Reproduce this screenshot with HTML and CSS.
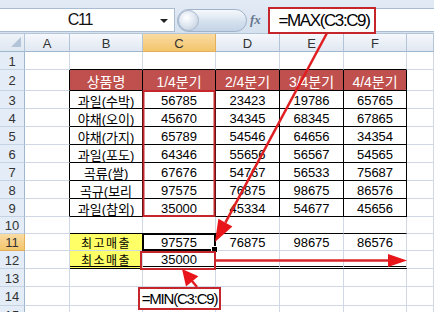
FILE: index.html
```html
<!DOCTYPE html>
<html lang="ko">
<head>
  <meta charset="UTF-8">
  <title>MAX / MIN 함수</title>
  <link rel="stylesheet" href="styles.css">
</head>
<body>
  <div class="window">
    <!-- 수식 입력줄 -->
    <div class="formula-bar">
      <div class="name-box">
        <span class="name">C11</span>
        <span class="drop"></span>
      </div>
      <div class="splitter"><span class="pill"><span class="knob"></span></span></div>
      <div class="fx">fx</div>
      <div class="formula-input"></div>
    </div>

    <!-- 시트 -->
    <div class="sheet">
      <div class="c corner"><span class="tri"></span></div>
      <div class="c ch">A</div><div class="c ch">B</div><div class="c ch sel">C</div>
      <div class="c ch">D</div><div class="c ch">E</div><div class="c ch">F</div><div class="c ch"></div>

      <div class="c rh">1</div><div class="c"></div>
      <div class="c tl"></div><div class="c tl"></div><div class="c tl"></div><div class="c tl"></div><div class="c tl"></div>
      <div class="c"></div>

      <div class="c rh">2</div><div class="c lb"></div>
      <div class="c tb th">상품명</div><div class="c tb th">1/4분기</div><div class="c tb th">2/4분기</div>
      <div class="c tb th">3/4분기</div><div class="c tb th">4/4분기</div>
      <div class="c"></div>

      <div class="c rh">3</div><div class="c lb"></div>
      <div class="c tb">과일(수박)</div><div class="c tb">56785</div><div class="c tb">23423</div>
      <div class="c tb">19786</div><div class="c tb">65765</div>
      <div class="c"></div>

      <div class="c rh">4</div><div class="c lb"></div>
      <div class="c tb">야채(오이)</div><div class="c tb">45670</div><div class="c tb">34345</div>
      <div class="c tb">68345</div><div class="c tb">67865</div>
      <div class="c"></div>

      <div class="c rh">5</div><div class="c lb"></div>
      <div class="c tb">야채(가지)</div><div class="c tb">65789</div><div class="c tb">54546</div>
      <div class="c tb">64656</div><div class="c tb">34354</div>
      <div class="c"></div>

      <div class="c rh">6</div><div class="c lb"></div>
      <div class="c tb">과일(포도)</div><div class="c tb">64346</div><div class="c tb">55656</div>
      <div class="c tb">56567</div><div class="c tb">54565</div>
      <div class="c"></div>

      <div class="c rh">7</div><div class="c lb"></div>
      <div class="c tb">곡류(쌀)</div><div class="c tb">67676</div><div class="c tb">54767</div>
      <div class="c tb">56533</div><div class="c tb">75687</div>
      <div class="c"></div>

      <div class="c rh">8</div><div class="c lb"></div>
      <div class="c tb">곡규(보리</div><div class="c tb">97575</div><div class="c tb">76875</div>
      <div class="c tb">98675</div><div class="c tb">86576</div>
      <div class="c"></div>

      <div class="c rh">9</div><div class="c lb"></div>
      <div class="c tb">과일(참외)</div><div class="c tb">35000</div><div class="c tb">45334</div>
      <div class="c tb">54677</div><div class="c tb">45656</div>
      <div class="c"></div>

      <div class="c rh">10</div><div class="c"></div>
      <div class="c tl"></div><div class="c tl"></div><div class="c tl"></div><div class="c tl"></div><div class="c tl"></div>
      <div class="c"></div>

      <div class="c rh sel">11</div><div class="c"></div>
      <div class="c label">최고매출</div><div class="c active">97575</div><div class="c">76875</div>
      <div class="c">98675</div><div class="c">86576</div>
      <div class="c"></div>

      <div class="c rh">12</div><div class="c"></div>
      <div class="c label dbl">최소매출</div><div class="c dbl">35000</div><div class="c dbl"></div>
      <div class="c dbl"></div><div class="c dbl"></div>
      <div class="c"></div>

      <div class="c rh">13</div><div class="c"></div><div class="c"></div><div class="c"></div>
      <div class="c"></div><div class="c"></div><div class="c"></div><div class="c"></div>

      <div class="c rh">14</div><div class="c"></div><div class="c"></div><div class="c"></div>
      <div class="c"></div><div class="c"></div><div class="c"></div><div class="c"></div>

      <div class="c rh">15</div><div class="c"></div><div class="c"></div><div class="c"></div>
      <div class="c"></div><div class="c"></div><div class="c"></div><div class="c"></div>
    </div>

    <!-- 빨간 표시와 화살표 -->
    <svg class="marks" width="434" height="312" viewBox="0 0 434 312">
      <rect x="143.5" y="91" width="71" height="125" fill="none" stroke="#c4262c" stroke-width="2"/>
      <rect x="141" y="252" width="74" height="17" fill="none" stroke="#c4262c" stroke-width="2"/>
      <line x1="327" y1="33" x2="225.4" y2="222.6" stroke="#e01f22" stroke-width="2.5"/>
      <polygon points="215,242 232.4,226.4 218.4,218.8" fill="#e8161b"/>
      <line x1="216" y1="260.5" x2="390" y2="260.5" stroke="#d8262a" stroke-width="2.5"/>
      <polygon points="407,260.5 388,254 388,267" fill="#e8161b"/>
      <line x1="197" y1="287" x2="192" y2="281" stroke="#e01f22" stroke-width="2.5"/>
      <polygon points="182,269 198.4,276.2 186,286.4" fill="#e8161b"/>
    </svg>

    <div class="callout callout-max">=MAX(C3:C9)</div>
    <div class="callout callout-min">=MIN(C3:C9)</div>
  </div>
</body>
</html>
```

FILE: styles.css
```css
* {
  box-sizing: border-box;
}
body {
  margin: 0;
  font-family: "Liberation Sans", "Noto Sans CJK KR", sans-serif;
  background: #fff;
}
.window {
  position: relative;
  width: 434px;
  height: 312px;
  overflow: hidden;
}

/* 수식 입력줄 */
.formula-bar {
  display: flex;
  height: 34px;
  padding-top: 8px;
  padding-bottom: 1px;
  background: linear-gradient(#e3ebf5, #d6e1ef);
  border-bottom: 1px solid #b6c6d9;
}
.name-box {
  position: relative;
  width: 175px;
  display: flex;
  align-items: center;
  justify-content: center;
  padding-right: 14px;
  background: #fff;
  border-top: 1px solid #a9bcd2;
  border-bottom: 1px solid #a9bcd2;
  border-right: 1px solid #a9bcd2;
}
.name {
  font-size: 16px;
  letter-spacing: -1.2px;
  color: #111;
}
.drop {
  position: absolute;
  right: 6px;
  top: 10px;
  border-left: 4px solid transparent;
  border-right: 4px solid transparent;
  border-top: 4px solid #222;
}
.splitter {
  width: 75px;
  display: flex;
  align-items: center;
  padding-left: 2px;
}
.pill {
  position: relative;
  width: 70px;
  height: 23px;
  border-radius: 12px;
  border: 1px solid #9fb2c9;
  background: linear-gradient(#f6f9fc, #d3dfed 60%, #c4d3e6);
}
.knob {
  position: absolute;
  left: 0;
  top: 0;
  width: 21px;
  height: 21px;
  border-radius: 50%;
  border: 1px solid #a8b9cd;
  background: radial-gradient(circle at 40% 35%, #ffffff 0, #e8eef6 35%, #b9c8da 100%);
}
.fx {
  width: 18px;
  display: flex;
  align-items: center;
  font-family: "Liberation Serif", serif;
  font-style: italic;
  font-weight: bold;
  font-size: 13px;
  color: #66778c;
}
.formula-input {
  flex: 1;
  background: #fff;
  border-top: 1px solid #a9bcd2;
  border-bottom: 1px solid #a9bcd2;
  border-left: 1px solid #a9bcd2;
}

/* 시트 */
.sheet {
  display: grid;
  grid-template-columns: 25px 45px 73px 73px 64px 64px 63px 1fr;
  grid-template-rows: 18px 18px 21px repeat(7, 18px) 17px 17px 18px 18px 19px 18px;
  font-size: 13px;
  color: #000;
}
.c {
  display: flex;
  align-items: center;
  justify-content: center;
  padding-top: 1px;
  white-space: nowrap;
  border-right: 1px solid #d0d7e5;
  border-bottom: 1px solid #d0d7e5;
}
.ch {
  background: linear-gradient(#f5f8fc, #e1e8f2);
  border-right-color: #b3c4d8;
  border-bottom-color: #9eb6ce;
  color: #333;
}
.corner {
  position: relative;
  background: linear-gradient(#eef3f9, #dfe7f1);
  border-right-color: #b3c4d8;
  border-bottom-color: #9eb6ce;
}
.tri {
  position: absolute;
  right: 3px;
  bottom: 4px;
  border-left: 10px solid transparent;
  border-bottom: 10px solid #b3c3d8;
}
.rh {
  background: #e4ecf7;
  border-right-color: #9eb6ce;
  border-bottom-color: #c5d2e2;
  color: #333;
}
.sel {
  background: linear-gradient(#f9dba3, #f3c56c);
  border-right-color: #e2b05a;
  border-bottom-color: #e2b05a;
}
.tl {
  border-bottom-color: #000;
}
.lb {
  border-right-color: #000;
}
.tb {
  border-right-color: #000;
  border-bottom-color: #000;
}
.th {
  background: #c0504d;
  color: #fff;
  font-size: 14px;
}
.label {
  background: #ffff66;
  font-size: 12px;
  letter-spacing: 1.5px;
}
.dbl {
  border-bottom: 3px double #000;
}
.active {
  position: relative;
}
.active::before {
  content: "";
  position: absolute;
  left: -1px;
  top: -1px;
  right: -1px;
  bottom: -1px;
  border: 2px solid #000;
}
.active::after {
  content: "";
  position: absolute;
  right: -3px;
  bottom: -3px;
  width: 5px;
  height: 5px;
  background: #000;
  border: 1px solid #fff;
}

/* 빨간 표시 */
.marks {
  position: absolute;
  left: 0;
  top: 0;
  pointer-events: none;
}
.callout {
  position: absolute;
  display: flex;
  align-items: center;
  justify-content: center;
  background: #fff;
  border: 2px solid #c4262c;
  color: #000;
}
.callout-max {
  left: 268px;
  top: 7px;
  width: 108px;
  height: 27px;
  padding-left: 4px;
  font-size: 17px;
  letter-spacing: -1.4px;
}
.callout-min {
  left: 138px;
  top: 287px;
  width: 83px;
  height: 23px;
  font-size: 15px;
  letter-spacing: -1.2px;
}
```
